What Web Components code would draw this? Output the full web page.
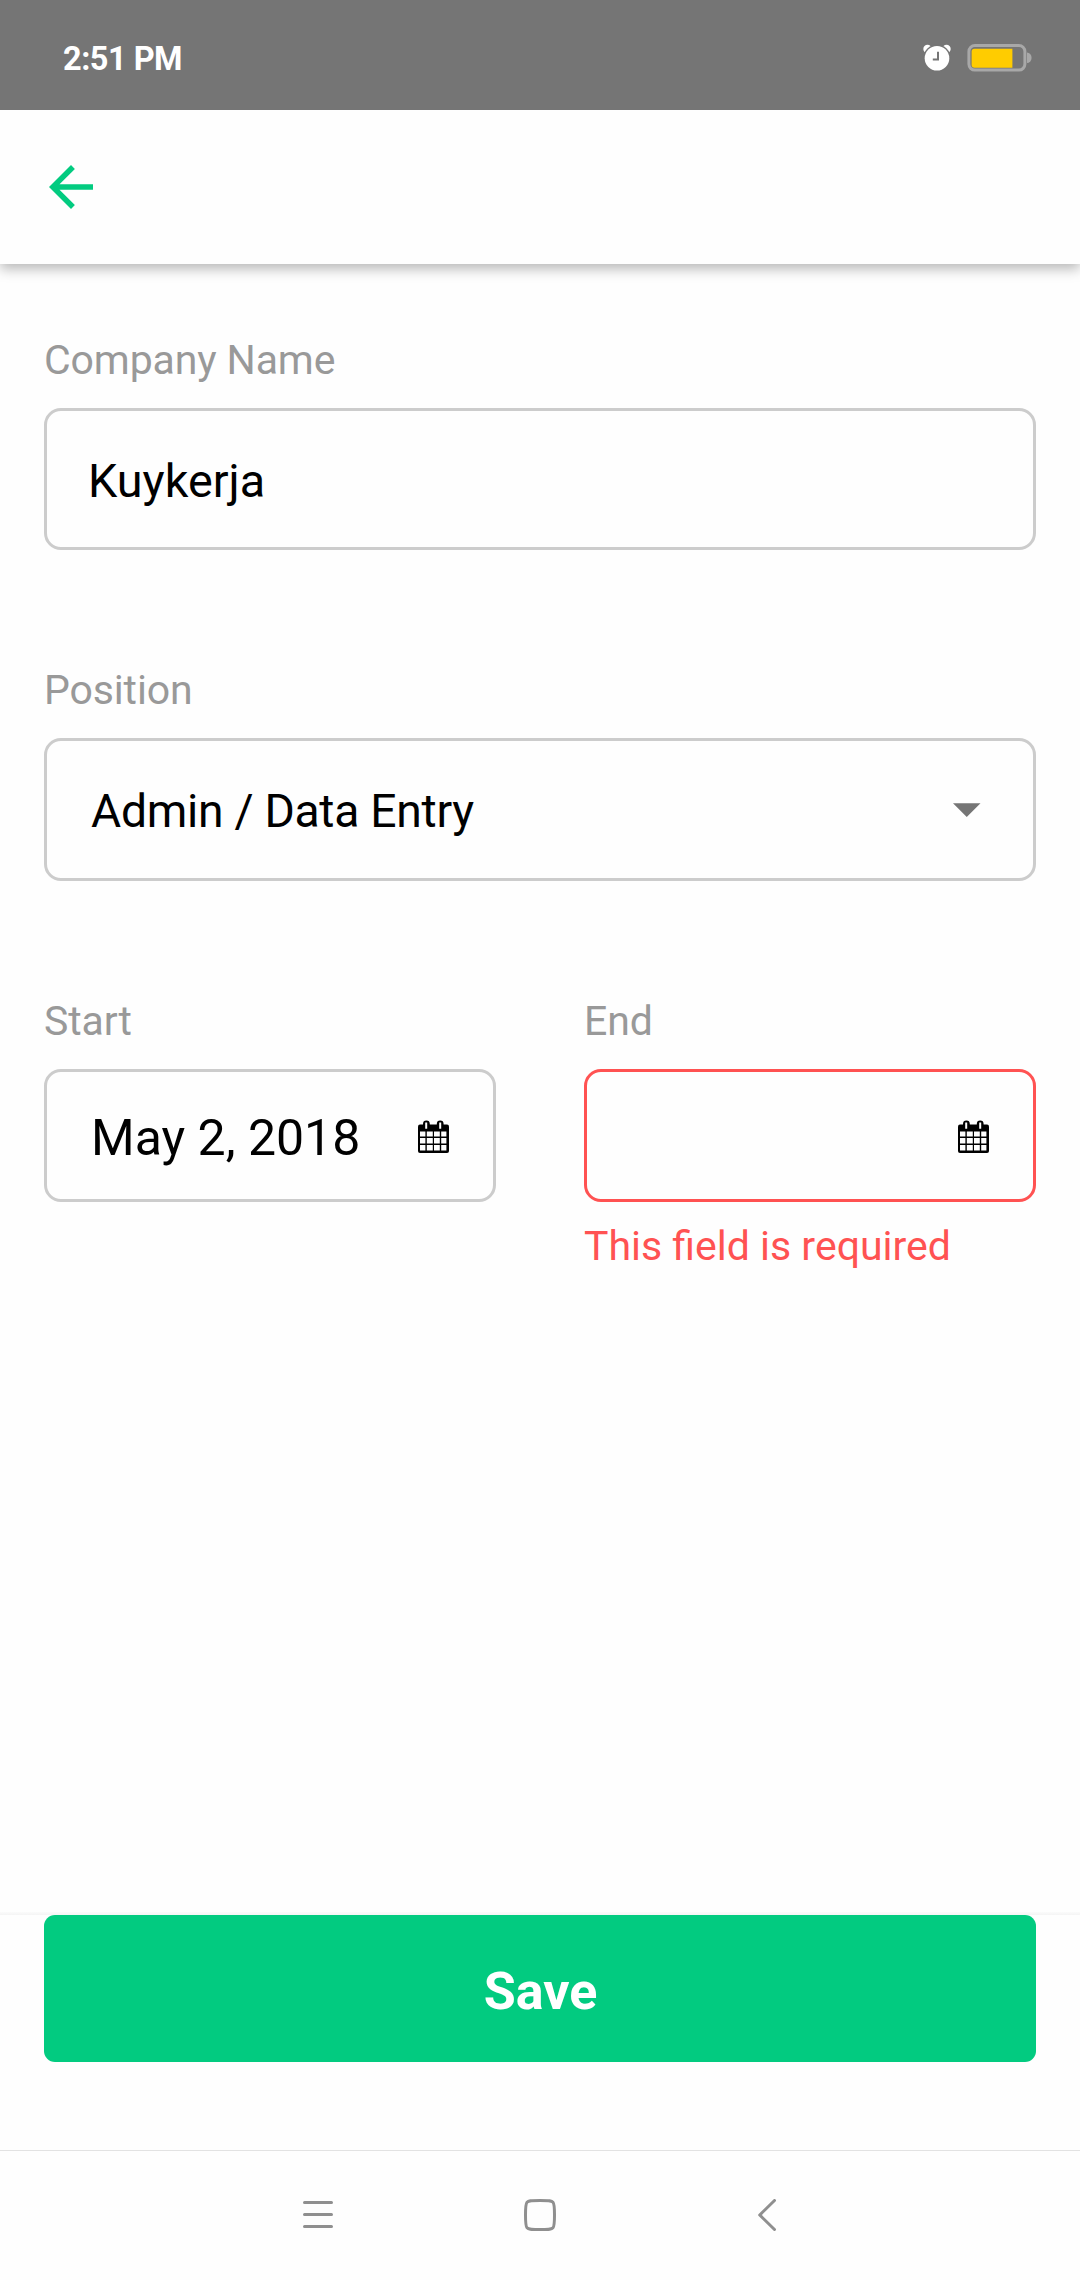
<!DOCTYPE html>
<html lang="en">
<head>
<meta charset="utf-8">
<title>Work experience</title>
<style>
  html, body { margin: 0; height: 100%; }
  body { background: #fefefe; font-family: Roboto, sans-serif; color: #000; }
</style>
</head>
<body>
<app-screen>
  <status-bar slot="top" time="2:51 PM"></status-bar>
  <app-header slot="top"></app-header>
  <form-field label="Company Name"><input-box class="company">Kuykerja</input-box></form-field>
  <form-field label="Position"><input-box class="position" icon="caret">Admin / Data Entry</input-box></form-field>
  <field-row>
    <form-field label="Start"><input-box class="date" icon="calendar">May 2, 2018</input-box></form-field>
    <form-field label="End" error="This field is required"><input-box class="date" icon="calendar" invalid></input-box></form-field>
  </field-row>
  <save-bar slot="bottom">Save</save-bar>
  <nav-bar slot="bottom"></nav-bar>
</app-screen>
<script>
const define = (name, render) => customElements.define(name, class extends HTMLElement {
  constructor() {
    super();
    this.attachShadow({ mode: 'open' }).innerHTML = render(this);
  }
});

define('app-screen', () => `
  <style>
    :host { display: flex; flex-direction: column; width: 1080px; height: 2280px; overflow: hidden; }
    main { flex: 1; display: flex; flex-direction: column; gap: 116px; padding: 72px 44px 0; }
  </style>
  <slot name="top"></slot><main><slot></slot></main><slot name="bottom"></slot>`);

define('status-bar', el => `
  <style>
    :host { display: flex; align-items: center; justify-content: space-between; box-sizing: border-box;
      height: 110px; flex: none; padding: 5px 47px 0 63px; background: #757575; color: #fff; }
    span { font: 700 32.5px/40px Roboto, sans-serif; letter-spacing: -.5px; padding-top: 3px; }
    div { display: flex; align-items: center; gap: 16px; }
    svg { display: block; }
  </style>
  <span>${el.getAttribute('time')}</span>
  <div>
    <svg width="28" height="28" viewBox="0 0 28 28">
      <g fill="#fff"><circle cx="4.5" cy="5" r="4.2"/><circle cx="23.5" cy="5" r="4.2"/></g>
      <circle cx="14" cy="14.2" r="13.6" fill="#757575"/>
      <circle cx="14" cy="14.2" r="12.3" fill="#fff"/>
      <path d="M15 7.8v7.6H9.8" fill="none" stroke="#757575" stroke-width="2"/>
    </svg>
    <svg width="66" height="28" viewBox="0 0 66 28">
      <rect x="1.9" y="1.5" width="56" height="24.6" rx="6" fill="none" stroke="#a8a8a8" stroke-width="3"/>
      <path d="M7.5 4.8H45.4V23.8H7.5Q4.6 23.8 4.6 20.8V7.8Q4.6 4.8 7.5 4.8z" fill="#fc0"/>
      <path d="M60 8.6a4.6 5.2 0 0 1 0 10.4z" fill="#a8a8a8"/>
    </svg>
  </div>`);

define('app-header', () => `
  <style>
    :host { display: flex; align-items: center; height: 154px; flex: none; box-sizing: border-box;
      padding-left: 38px; background: #fefefe; box-shadow: 0 5px 12px rgba(0,0,0,.28); clip-path: inset(0 0 -30px 0); }
    svg { display: block; }
  </style>
  <svg width="66" height="66" viewBox="0 0 24 24"><path fill="#02cb80" d="M20 11H7.83l5.59-5.59L12 4l-8 8 8 8 1.41-1.41L7.83 13H20v-2z"/></svg>`);

define('field-row', () => `
  <style>
    :host { display: flex; gap: 88px; align-items: flex-start; }
    ::slotted(*) { flex: 1 1 0; min-width: 0; }
  </style><slot></slot>`);

define('form-field', el => `
  <style>
    :host { display: flex; flex-direction: column; }
    label, p { font: 400 41px/48px Roboto, sans-serif; margin: 0; white-space: nowrap; }
    label { color: #999; margin-bottom: 24px; letter-spacing: -.13px; }
    p { color: #ff5252; margin-top: 20px; }
  </style>
  <label>${el.getAttribute('label')}</label><slot></slot>
  ${el.hasAttribute('error') ? `<p>${el.getAttribute('error')}</p>` : ''}`);

const icons = {
  caret: '<svg width="27.5" height="14" viewBox="0 0 27.5 14"><path fill="#757575" d="M0 .3h27.5L13.75 14z"/></svg>',
  calendar: `<svg width="31" height="33" viewBox="0 0 31 33">
    <rect x="0" y="4.4" width="31" height="28.6" rx="2"/>
    <path d="M5 8V4a3.4 3.4 0 0 1 6.8 0v4zM18.8 8V4a3.4 3.4 0 0 1 6.8 0v4z"/>
    <path fill="#fefefe" d="M7.2 2.6h2v6.2h-2zM21.2 2.6h2v6.2h-2z"/>
    <path fill="#fefefe" d="M2 11.6h5.4v5H2zM8.8 11.6h6v5h-6zM16 11.6h5.8v5H16zM23.2 11.6h5.2v5h-5.2zM2 18h5.4v5.6H2zM8.8 18h6v5.6h-6zM16 18h5.8v5.6H16zM23.2 18h5.2v5.6h-5.2zM2 25h5.4v5.6H2zM8.8 25h6v5.6h-6zM16 25h5.8v5.6H16zM23.2 25h5.2v5.6h-5.2z"/>
  </svg>`
};

define('input-box', el => `
  <style>
    :host { display: flex; align-items: center; justify-content: space-between; box-sizing: border-box;
      border: 3px solid #ccc; border-radius: 17px; white-space: nowrap; }
    :host(.company) { height: 142px; padding: 0 41px; font-size: 46.75px; --drop: 4px; }
    :host(.position) { height: 143px; padding: 0 52.5px 0 44px; font-size: 46.25px; letter-spacing: -.28px; --drop: 3px; }
    :host(.date) { height: 133px; padding: 1px 44px 0; font-size: 50px; --drop: 3px; }
    :host([invalid]) { border-color: #ff5252; }
    span { line-height: 60px; padding-top: var(--drop); }
    svg { display: block; flex: none; }
  </style>
  <span><slot></slot></span>${icons[el.getAttribute('icon')] || ''}`);

define('save-bar', () => `
  <style>
    :host { display: block; flex: none; padding: 3px 44px 88px;
      background: linear-gradient(#fbfbfb, #f4f4f4) top / 100% 3px no-repeat; }
    button { display: block; width: 100%; height: 147px; border: 0; border-radius: 11px; padding: 6px 0 0 1px;
      background: #02cb80; color: #fff; font: 700 52px/60px Roboto, sans-serif; }
  </style><button><slot></slot></button>`);

define('nav-bar', () => `
  <style>
    :host { display: flex; justify-content: center; align-items: center; gap: 190px; flex: none;
      box-sizing: border-box; height: 130px; padding-bottom: 1px; border-top: 1px solid #e2e2e2; }
    svg { display: block; fill: none; stroke: #8f8f8f; stroke-width: 3; stroke-linecap: round; stroke-linejoin: round; }
  </style>
  <svg width="32" height="32" viewBox="0 0 32 32"><path d="M2.5 3.5h27M2.5 15.5h27M2.5 27.5h27"/></svg>
  <svg width="32" height="32" viewBox="0 0 32 32"><path d="M16 1.5C26 1.5 27.7 1.8 29 3.2 30.2 4.5 30.5 7 30.5 16S30.2 27.5 29 28.8C27.7 30.2 26 30.5 16 30.5S4.3 30.2 3 28.8C1.8 27.5 1.5 25 1.5 16S1.8 4.5 3 3.2C4.3 1.8 6 1.5 16 1.5z"/></svg>
  <svg width="32" height="32" viewBox="0 0 32 32"><path d="M28.5 1.5L13.7 16 28.5 30.5"/></svg>`);
</script>
</body>
</html>
